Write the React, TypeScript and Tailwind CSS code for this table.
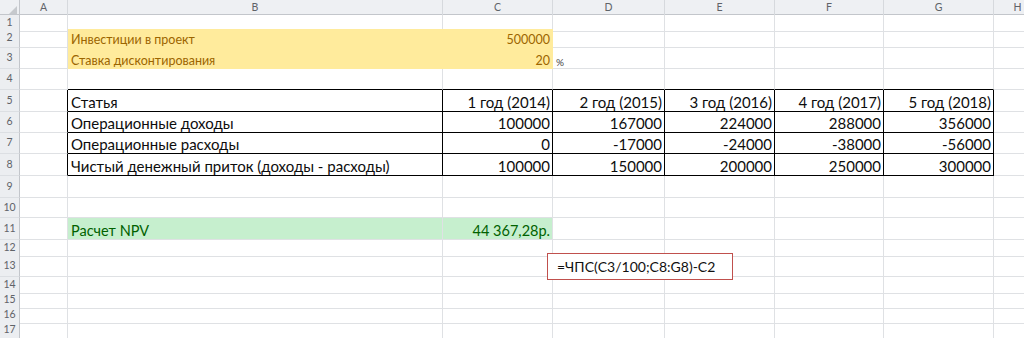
import React from 'react'

type Cell = { t?: string; right?: boolean; cls?: string; border?: string }

const COL_LETTERS = ['A', 'B', 'C', 'D', 'E', 'F', 'G', 'H', '']

// column widths: row header, A..H, I
const GRID = 'grid grid-cols-[20px_48px_375px_110px_112px_110px_109px_110px_48px_80px]'

const ROW_H = [
    'h-[14px]', 'h-[19px]', 'h-[21px]', 'h-[21px]', 'h-[22px]', 'h-[21px]', 'h-[21px]', 'h-[22px]',
    'h-[22px]', 'h-[20px]', 'h-[22px]', 'h-[15px]', 'h-[22px]', 'h-[15px]', 'h-[15px]', 'h-[15px]',
    'h-[15px]', 'h-[15px]',
]

const YELLOW = 'bg-[#ffeb9c] text-[#9c6500] text-[12.5px] border-[#ffeb9c]'
const GREEN = 'bg-[#c6efce] text-[#006100] text-[14.5px] border-[#c6efce]'
const TBL = 'text-[15px] text-[#0d0d0d] border-r-black border-b-black'

const tableRows: string[][] = [
    ['Статья', '1 год (2014)', '2 год (2015)', '3 год (2016)', '4 год (2017)', '5 год (2018)'],
    ['Операционные доходы', '100000', '167000', '224000', '288000', '356000'],
    ['Операционные расходы', '0', '-17000', '-24000', '-38000', '-56000'],
    ['Чистый денежный приток (доходы - расходы)', '100000', '150000', '200000', '250000', '300000'],
]

function getCell(r: number, c: number): Cell {
    // r is 1-based row, c is 0-based column (0 = A)
    if (r === 2 && c === 1) return { t: 'Инвестиции в проект', cls: YELLOW }
    if (r === 2 && c === 2) return { t: '500000', right: true, cls: YELLOW }
    if (r === 3 && c === 1) return { t: 'Ставка дисконтирования', cls: YELLOW }
    if (r === 3 && c === 2) return { t: '20', right: true, cls: YELLOW }
    if (r === 3 && c === 3) return { t: '%', cls: 'text-[10px] text-[#444]' }
    if (r === 4 && c >= 1 && c <= 6) return { cls: 'border-b-black' }
    if (r >= 5 && r <= 8) {
        if (c === 0) return { cls: 'border-r-black' }
        if (c >= 1 && c <= 6) return { t: tableRows[r - 5][c - 1], right: c > 1, cls: TBL }
    }
    if (r === 11 && c === 1) return { t: 'Расчет NPV', cls: GREEN }
    if (r === 11 && c === 2) return { t: '44 367,28р.', right: true, cls: GREEN }
    return {}
}

export default function App() {
    return (
        <div className="relative w-[1024px] h-[338px] overflow-hidden bg-white font-['Lato','Liberation_Sans',sans-serif]">
            {/* Column headers */}
            <div className={`${GRID} h-[15px] bg-[#eef0f3] border-b border-[#c3c6cb]`}>
                <div className="relative border-r border-[#c3c6cb]">
                    <svg width="8" height="8" viewBox="0 0 8 8" className="absolute right-[2px] bottom-[2px]">
                        <polygon points="8,0 8,8 0,8" fill="#c6c9cd" />
                    </svg>
                </div>
                {COL_LETTERS.map((l, i) => (
                    <div key={i} className="flex items-center justify-center border-r border-[#d6d9dd] text-[10.5px] text-[#5f6368]">
                        {l}
                    </div>
                ))}
            </div>

            {/* Rows */}
            {ROW_H.map((h, i) => {
                const r = i + 1
                return (
                    <div key={r} className={`${GRID} ${h}`}>
                        <div className="flex items-center justify-center bg-[#eceef1] border-r border-b border-r-[#c3c6cb] border-b-[#dcdfe3] text-[10.5px] text-[#5f6368]">
                            {r < 18 ? r : ''}
                        </div>
                        {COL_LETTERS.map((_, c) => {
                            const cell = getCell(r, c)
                            return (
                                <div
                                    key={c}
                                    className={`flex items-end overflow-visible whitespace-nowrap border-r border-b border-[#dfe1e4] pb-[1px] leading-none ${cell.right ? 'justify-end pr-[2px]' : 'pl-[3px]'} ${cell.cls ?? ''}`}
                                >
                                    {cell.t}
                                </div>
                            )
                        })}
                    </div>
                )
            })}

            {/* Formula callout */}
            <div className="absolute left-[547px] top-[253px] w-[186px] h-[27px] bg-white border-[1.5px] border-[#c0504d] flex items-center pl-[9px] text-[14px] text-[#111]">
                =ЧПС(C3/100;C8:G8)-C2
            </div>
        </div>
    )
}
